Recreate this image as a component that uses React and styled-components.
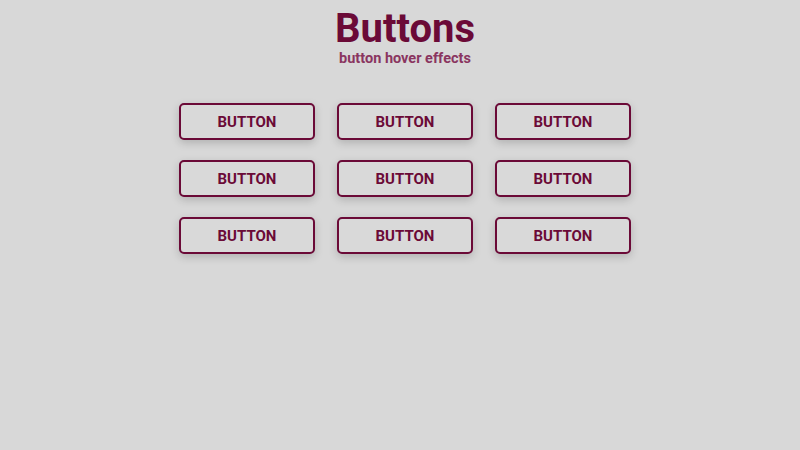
import { createGlobalStyle } from "styled-components";
import styled from "styled-components";

const GlobalStyle = createGlobalStyle`
    html, body {
        margin: 0;
        padding: 0;
        background: #d8d8d8;
        font-family: Roboto, "Liberation Sans", sans-serif;
    }
`

const Page = styled.div`
    width: 800px;
    height: 450px;
    box-sizing: border-box;
    padding-left: 10px;
    display: flex;
    flex-direction: column;
    align-items: center;
`

const Header = styled.header`
    display: flex;
    flex-direction: column;
    align-items: center;
    gap: 2px;
    margin-top: 9px;
`

const Title = styled.h1`
    margin: 0;
    font-size: 40px;
    font-weight: 700;
    line-height: 40px;
    color: #6b0a37;
`

const Subtitle = styled.p`
    margin: 0;
    font-size: 14.5px;
    font-weight: 700;
    line-height: 16px;
    color: #8a3560;
`

const Grid = styled.div`
    display: grid;
    grid-template-columns: repeat(3, 136px);
    column-gap: 22px;
    row-gap: 20px;
    margin-top: 36px;
`

const Button = styled.button`
    height: 37px;
    box-sizing: border-box;
    border: 2px solid #6b0a37;
    border-radius: 5px;
    background: #d9d9d9;
    box-shadow: 0 3px 8px rgba(0, 0, 0, 0.18);
    font-family: inherit;
    font-size: 15px;
    font-weight: 700;
    color: #6b0a37;
    text-transform: uppercase;
    cursor: pointer;
`

const buttons = Array.from({ length: 9 }, (_, i) => i);

export default function App() {
    return (
        <>
            <GlobalStyle />
            <Page>
                <Header>
                    <Title>Buttons</Title>
                    <Subtitle>button hover effects</Subtitle>
                </Header>
                <Grid>
                    {buttons.map((b) => (
                        <Button key={b}>Button</Button>
                    ))}
                </Grid>
            </Page>
        </>
    )
}
